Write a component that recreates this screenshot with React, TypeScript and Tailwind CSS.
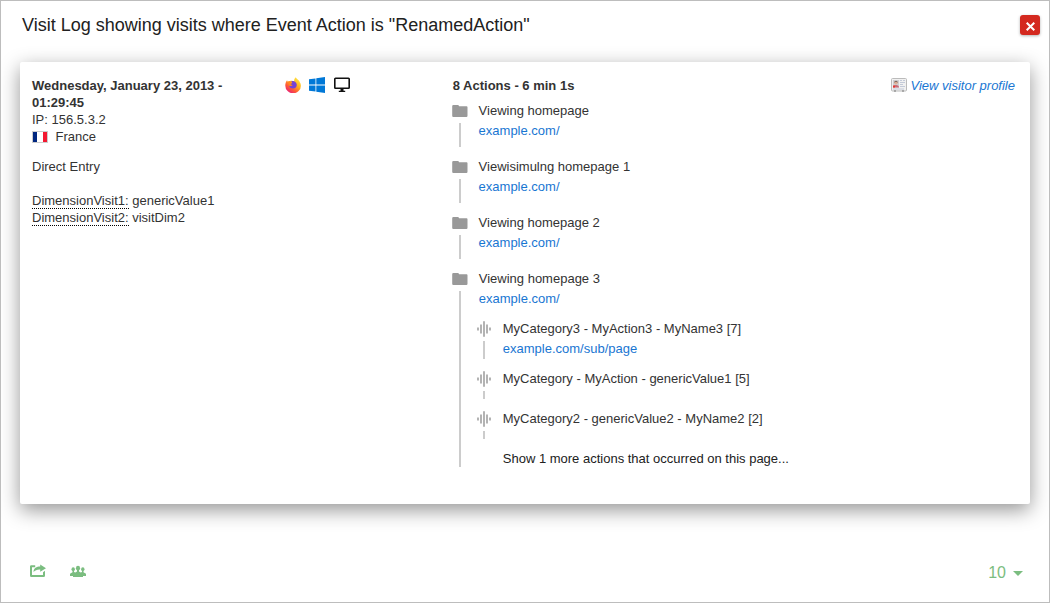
import React from "react";

const FolderIcon = () => (
  <svg className="mt-[4px] block h-[12px] w-[16px]" viewBox="0 0 16 12" fill="#999">
    <path d="M.2 1.2Q.2 0 1.400 0H5.800Q6.800 0 7.100 1.200H14.600Q15.500 1.200 15.500 2.200V10.800Q15.500 12 14.400 12H1.300Q.2 12 .2 10.800Z" />
  </svg>
);

const EventIcon = () => (
  <svg className="mt-[2px] block h-[16px] w-[14px]" viewBox="0 0 14 16" fill="#b3b3b3">
    <path d="M0 6.500h2v3H0zM3 3.500h2v9H3zM6 .3h2v15.400H6zM9 3.500h2v9H9zM12 6.500h2v3h-2z" />
  </svg>
);

const FirefoxIcon = () => (
  <svg className="h-4 w-4" viewBox="0 0 16 16">
    <defs>
      <linearGradient id="fire" x1="0.85" y1="0" x2="0.15" y2="1">
        <stop offset="0" stopColor="#fff04a" />
        <stop offset=".4" stopColor="#ffb01e" />
        <stop offset=".68" stopColor="#ff5a36" />
        <stop offset="1" stopColor="#e31587" />
      </linearGradient>
    </defs>
    <path d="M10.800 .2c.6 1.500 2 2 3 3.300.6.7.9 1.300 1 1.800.7.900 1.100 2 1.100 3.400A7.700 7.500 0 0 1 .3 8.700C.2 6.500 1 4.500 2.100 3.200l.4 1.300 1.400-.3c.8-.5 1.800-.7 2.900-.4l2.500.5C8.900 2.900 9.600 1.200 10.800.2Z" fill="url(#fire)" />
    <path d="M6.200 4.200c2.500-.8 5.400.9 5.600 3.600.1 2.200-1.600 3.800-3.800 3.800-2.100 0-3.700-1.300-3.900-3 1 .8 2.600.6 3.400-.3l-2-.6c-.3-1 .6-1.500 1.700-1.700-.1-.7-.4-1.300-1-1.800Z" fill="#7542d5" />
    <path d="M3.300 4.700c1.500-.3 2.900.3 3.400 1.500L5.200 7.300l2.400.8c-.9 1-2.500 1-3.500.1Z" fill="#ff8a1c" />
  </svg>
);

const ProfileIcon = () => (
  <svg className="mt-px h-[14px] w-4" viewBox="0 0 16 14">
    <path d="M.5 1.500Q.5.500 1.500.500h13q1 0 1 1v10.500q0 1-1 1H1.500q-1 0-1-1Z" fill="#f1f1f1" stroke="#bbb" />
    <path d="M3 13h2M11 13h2" stroke="#777" />
    <rect x="2" y="2" width="6" height="7.500" fill="#cfcfd2" />
    <circle cx="5" cy="4.800" r="1.800" fill="#dfb096" />
    <path d="M3.200 4.700C3.200 2 6.800 2 6.800 4.700L5 3.700Z" fill="#77645b" />
    <path d="M2 9.500Q2 7 5 7T8 9.500Z" fill="#c66a78" />
    <path d="M2 7.500h2v2H2Z" fill="#e8382d" />
    <path d="M9 2.500h2M12 2.500h2M9 4.500h5M9 6.500h3M9 8.500h5M2 11h11" stroke="#c3cad8" />
  </svg>
);

type Event = { label: string; url?: string };

const pages = ["Viewing homepage", "Viewisimulng homepage 1", "Viewing homepage 2"];
const events: Event[] = [
  { label: "MyCategory3 - MyAction3 - MyName3 [7]", url: "example.com/sub/page" },
  { label: "MyCategory - MyAction - genericValue1 [5]" },
  { label: "MyCategory2 - genericValue2 - MyName2 [2]" },
];

function PageHead({ title }: { title: string }) {
  return (
    <>
      <div>{title}</div>
      <a className="block text-[#1976d2]">example.com/</a>
    </>
  );
}

export default function App() {
  return (
    <div className="flex h-[603px] w-[1050px] flex-col overflow-hidden border border-[#bdbdbd] bg-white font-['Liberation_Sans',Arial,sans-serif] text-[13px] leading-[17px] text-[#333]">
      <header className="flex h-[61px] shrink-0 items-start justify-between pl-[21px] pr-[9px]">
        <h1 className="pt-[12px] text-[18px] leading-6 text-[#212121]">
          Visit Log showing visits where Event Action is "RenamedAction"
        </h1>
        <button className="mt-[14px] flex h-5 w-5 items-center justify-center rounded-[3px] bg-[#d4291f] shadow-[0_1px_3px_rgba(0,0,0,0.3)]">
          <svg className="mt-[2px] h-[9px] w-[9px]" viewBox="0 0 9 9" stroke="#fff" strokeWidth="2">
            <path d="M.7.7l7.600 7.600M8.300.7L.7 8.300" />
          </svg>
        </button>
      </header>

      <main className="mx-[19px] flex h-[442px] shrink-0 rounded-[2px] bg-white pl-3 pr-[15px] pt-[15px] shadow-[0_6px_20px_rgba(0,0,0,0.42)]">
        <section className="w-[253px]">
          <strong className="block w-[210px]">Wednesday, January 23, 2013 - 01:29:45</strong>
          <div>IP: 156.5.3.2</div>
          <div className="flex items-center">
            <svg className="mr-[7.500px] mt-px h-3 w-4" viewBox="0 0 16 12">
              <path fill="#ccc" d="M0 0h16v12H0z" />
              <path fill="#fff" d="M5 1h6v10H5z" />
              <path fill="#00267f" d="M1 1h4v10H1z" />
              <path fill="#f31830" d="M11 1h4v10h-4z" />
            </svg>
            France
          </div>
          <div className="mt-[13px]">Direct Entry</div>
          <div className="mt-[17px]">
            <span className="border-b border-dotted border-black">DimensionVisit1:</span> genericValue1
          </div>
          <div>
            <span className="border-b border-dotted border-black">DimensionVisit2:</span> visitDim2
          </div>
        </section>

        <div className="flex h-4 w-[167.750px] shrink-0 gap-2">
          <FirefoxIcon />
          <svg className="h-4 w-4" viewBox="0 0 16 16" fill="#0078d7">
            <path d="M0 2.300l6.500-.9v6.200H0zM7.300 1.300L16 0v7.600H7.300zM0 8.400h6.500v6.200L0 13.700zM7.300 8.400H16V16l-8.700-1.300z" />
          </svg>
          <svg className="ml-px h-4 w-4" viewBox="0 0 16 16">
            <rect x=".8" y="1.300" width="14.400" height="10" rx=".7" fill="#fff" stroke="#111" strokeWidth="1.600" />
            <path d="M6.500 11.500h3v2.300h1.700v1.300H4.800v-1.300h1.700z" fill="#111" />
          </svg>
        </div>

        <section className="min-w-0 flex-1">
          <div className="flex h-6 items-start justify-between">
            <strong>8 Actions - 6 min 1s</strong>
            <a className="flex gap-[3.500px] italic text-[#1976d2]">
              <ProfileIcon />
              View visitor profile
            </a>
          </div>
          <div className="leading-5">
            {pages.map((page) => (
              <div key={page} className="flex h-14 gap-[10px]">
                <div className="w-4 shrink-0 -ml-[0.750px]">
                  <FolderIcon />
                  <div className="ml-[7px] mt-[6px] h-6 w-[2px] bg-[#ccc]" />
                </div>
                <div className="pl-[0.600px]"><PageHead title={page} /></div>
              </div>
            ))}
            <div className="flex gap-[10px]">
              <div className="w-4 shrink-0 -ml-[0.750px]">
                <FolderIcon />
                <div className="ml-[7px] mt-[6px] h-[176px] w-[2px] bg-[#ccc]" />
              </div>
              <div className="pl-[0.750px]">
                <PageHead title="Viewing homepage 3" />
                <div className="mt-[10px]">
                  {events.map((event) => (
                    <div key={event.label} className={event.url ? "flex h-[50px]" : "flex h-10"}>
                      <div className="-ml-[1.750px] w-[25.750px] shrink-0">
                        <EventIcon />
                        <div className={event.url ? "ml-[6px] mt-[4px] h-[18px] w-[2px] bg-[#ccc]" : "ml-[6px] mt-[4px] h-2 w-[2px] bg-[#ccc]"} />
                      </div>
                      <div>
                        <div>{event.label}</div>
                        {event.url && <a className="block text-[#1976d2]">{event.url}</a>}
                      </div>
                    </div>
                  ))}
                  <div className="pl-6 text-[#212121]">Show 1 more actions that occurred on this page...</div>
                </div>
              </div>
            </div>
          </div>
        </section>
      </main>

      <footer className="flex flex-1 items-start justify-between pl-[29px] pr-[26px] pt-[58px] text-[#7bbd80]">
        <div className="flex gap-6 pt-px">
          <svg className="h-4 w-4" viewBox="0 0 16 16" fill="currentColor">
            <path d="M5.200 2.200v2H2V12h11V9.200l2-1.500v5q0 1.300-1.300 1.300H1.300Q0 14 0 12.700V3.500q0-1.300 1.300-1.300Z" />
            <path d="M10.200 1.400L16 5.200l-5.800 3.600V6.600C7.500 6.400 5 7.300 3.500 9c.2-3.800 3-5.400 6.700-5.400Z" />
          </svg>
          <svg className="h-4 w-4" viewBox="0 0 16 16" fill="currentColor">
            <ellipse cx="3.200" cy="6.200" rx="1.700" ry="1.900" />
            <ellipse cx="8" cy="5.200" rx="2.100" ry="2.400" />
            <ellipse cx="12.800" cy="6.200" rx="1.700" ry="1.900" />
            <path d="M2.500 7.500h1.500v1.500l1.300.6 1.700-1V7h2v1.600l1.700 1 1.300-.6V7.500h1.500v1.700l2.500 1.500V13h-3v1H3v-1H0v-2.300l2.500-1.500Z" />
          </svg>
        </div>
        <div className="flex items-center gap-[7px] pt-px text-[16px] leading-[20px]">
          10
          <svg className="mt-px h-[5px] w-[10px]" viewBox="0 0 10 5" fill="currentColor"><path d="M0 0h10L5 5z" /></svg>
        </div>
      </footer>
    </div>
  );
}
